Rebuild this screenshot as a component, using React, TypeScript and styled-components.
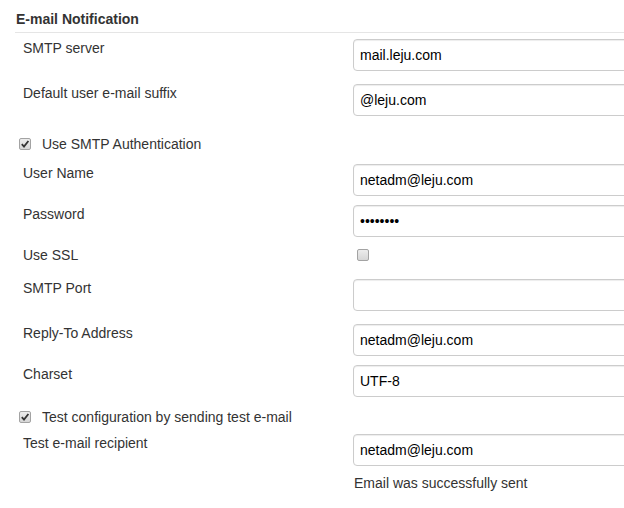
import React from "react";
import styled, { createGlobalStyle } from "styled-components";

const Global = createGlobalStyle`
  html, body { margin: 0; padding: 0; background: #fff; overflow: hidden; }
  body { font-family: "Liberation Sans", Arial, Helvetica, sans-serif; font-size: 14px; color: #333; }
`;

const Page = styled.div`
  padding-left: 15px;
  overflow: hidden;
`;

const SectionHeader = styled.div`
  padding: 9px 0 3px 1px;
  line-height: 20px;
  font-weight: bold;
  font-size: 14px;
  color: #333;
  border-bottom: 1px solid #e5e5e5;
`;

const Row = styled.div<{ $mt: number }>`
  display: grid;
  grid-template-columns: 330px 300px;
  padding-left: 8px;
  margin-top: ${(p) => p.$mt}px;
  align-items: start;
`;

const Label = styled.div`
  line-height: 18px;
  color: #333;
`;

const Field = styled.input`
  box-sizing: border-box;
  display: block;
  width: 300px;
  height: 32px;
  margin: 0;
  padding: 0 6px;
  border: 1px solid #ccc;
  border-radius: 4px;
  box-shadow: inset 0 1px 1px rgba(0, 0, 0, 0.075);
  font-family: "Liberation Sans", Arial, sans-serif;
  font-size: 14px;
  color: #000;
  background: #fff;
  outline: none;
`;

const CheckRow = styled.label<{ $mt: number }>`
  display: flex;
  align-items: center;
  height: 20px;
  margin-top: ${(p) => p.$mt}px;
  padding-left: 4px;
  gap: 11px;
  color: #333;
`;

const Box = styled.span`
  box-sizing: border-box;
  display: inline-flex;
  align-items: center;
  justify-content: center;
  width: 12px;
  height: 12px;
  border: 1px solid #a3a3a3;
  border-radius: 2px;
  background: linear-gradient(#ececec, #d6d6d6);
  flex: none;
`;

const BoxCell = styled.div`
  height: 18px;
  display: flex;
  align-items: center;
  padding-left: 4px;
`;

const Status = styled.div<{ $mt: number }>`
  margin-top: ${(p) => p.$mt}px;
  margin-left: 339px;
  line-height: 20px;
  color: #333;
`;

const Checkbox = ({ checked }: { checked?: boolean }) => (
  <Box>
    {checked && (
      <svg width="10" height="10" viewBox="0 0 10 10">
        <path d="M1.8 5.2 L4 7.6 L8.4 2" fill="none" stroke="#333" strokeWidth="1.8" />
      </svg>
    )}
  </Box>
);

const TextRow = ({ mt, label, value, type }: { mt: number; label: string; value: string; type?: string }) => (
  <Row $mt={mt}>
    <Label>{label}</Label>
    <Field type={type || "text"} defaultValue={value} readOnly />
  </Row>
);

export default function App() {
  return (
    <>
      <Global />
      <Page>
        <SectionHeader>E-mail Notification</SectionHeader>
        <TextRow mt={6} label="SMTP server" value="mail.leju.com" />
        <TextRow mt={13} label="Default user e-mail suffix" value="@leju.com" />
        <CheckRow $mt={18}>
          <Checkbox checked />
          Use SMTP Authentication
        </CheckRow>
        <TextRow mt={10} label="User Name" value="netadm@leju.com" />
        <TextRow mt={9} label="Password" value="12345678" type="password" />
        <Row $mt={9}>
          <Label>Use SSL</Label>
          <BoxCell>
            <Checkbox />
          </BoxCell>
        </Row>
        <TextRow mt={15} label="SMTP Port" value="" />
        <TextRow mt={13} label="Reply-To Address" value="netadm@leju.com" />
        <TextRow mt={9} label="Charset" value="UTF-8" />
        <CheckRow $mt={10}>
          <Checkbox checked />
          Test configuration by sending test e-mail
        </CheckRow>
        <TextRow mt={7} label="Test e-mail recipient" value="netadm@leju.com" />
        <Status $mt={7}>Email was successfully sent</Status>
      </Page>
    </>
  );
}
